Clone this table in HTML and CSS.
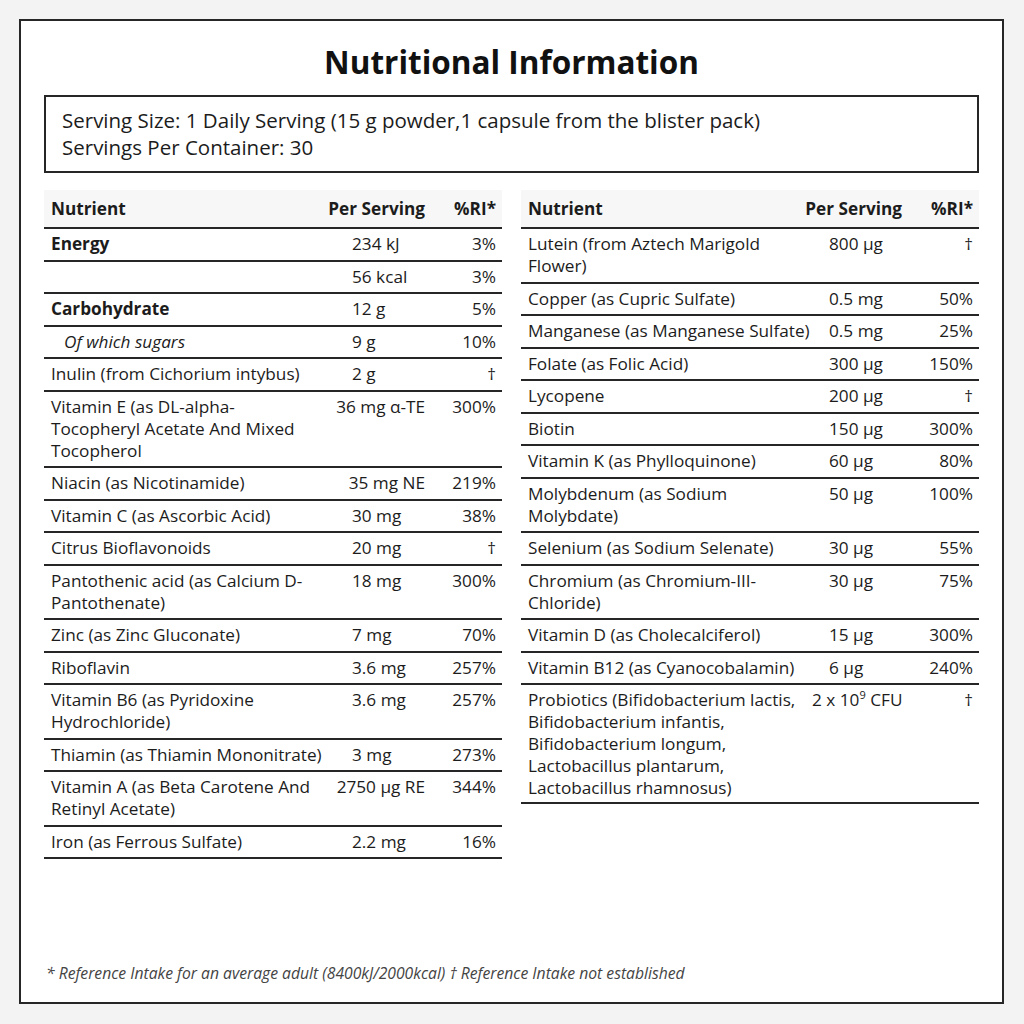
FILE: index.html
```html
<!DOCTYPE html>
<html lang="en">
<head>
<meta charset="utf-8">
<title>Nutritional Information</title>
<link rel="stylesheet" href="styles.css">
</head>
<body>
<div class="card">
  <h1 class="title">Nutritional Information</h1>
  <div class="serving">
    <div>Serving Size: 1 Daily Serving (15 g powder,1 capsule from the blister pack)</div>
    <div>Servings Per Container: 30</div>
  </div>
  <div class="tables">
    <table class="nt nt-left">
      <colgroup><col class="c1"><col class="c2"><col class="c3"></colgroup>
      <thead>
        <tr><th class="name">Nutrient</th><th class="amt"><span class="hd">Per Serving</span></th><th class="ri">%RI*</th></tr>
      </thead>
      <tbody>
        <tr><td class="name bold">Energy</td><td class="amt"><span class="v">234 kJ</span></td><td class="ri">3%</td></tr>
        <tr><td class="name"></td><td class="amt"><span class="v">56 kcal</span></td><td class="ri">3%</td></tr>
        <tr><td class="name bold">Carbohydrate</td><td class="amt"><span class="v">12 g</span></td><td class="ri">5%</td></tr>
        <tr><td class="name sub">Of which sugars</td><td class="amt"><span class="v">9 g</span></td><td class="ri">10%</td></tr>
        <tr><td class="name">Inulin (from Cichorium intybus)</td><td class="amt"><span class="v">2 g</span></td><td class="ri">†</td></tr>
        <tr><td class="name">Vitamin E (as DL-alpha-Tocopheryl Acetate And Mixed Tocopherol</td><td class="amt"><span class="v">36 mg α-TE</span></td><td class="ri">300%</td></tr>
        <tr><td class="name">Niacin (as Nicotinamide)</td><td class="amt"><span class="v">35 mg NE</span></td><td class="ri">219%</td></tr>
        <tr><td class="name">Vitamin C (as Ascorbic Acid)</td><td class="amt"><span class="v">30 mg</span></td><td class="ri">38%</td></tr>
        <tr><td class="name">Citrus Bioflavonoids</td><td class="amt"><span class="v">20 mg</span></td><td class="ri">†</td></tr>
        <tr><td class="name">Pantothenic acid (as Calcium D-Pantothenate)</td><td class="amt"><span class="v">18 mg</span></td><td class="ri">300%</td></tr>
        <tr><td class="name">Zinc (as Zinc Gluconate)</td><td class="amt"><span class="v">7 mg</span></td><td class="ri">70%</td></tr>
        <tr><td class="name">Riboflavin</td><td class="amt"><span class="v">3.6 mg</span></td><td class="ri">257%</td></tr>
        <tr><td class="name">Vitamin B6 (as Pyridoxine Hydrochloride)</td><td class="amt"><span class="v">3.6 mg</span></td><td class="ri">257%</td></tr>
        <tr><td class="name">Thiamin (as Thiamin Mononitrate)</td><td class="amt"><span class="v">3 mg</span></td><td class="ri">273%</td></tr>
        <tr><td class="name">Vitamin A (as Beta Carotene And Retinyl Acetate)</td><td class="amt"><span class="v">2750 µg RE</span></td><td class="ri">344%</td></tr>
        <tr><td class="name">Iron (as Ferrous Sulfate)</td><td class="amt"><span class="v">2.2 mg</span></td><td class="ri">16%</td></tr>
      </tbody>
    </table>
    <table class="nt nt-right">
      <colgroup><col class="c1"><col class="c2"><col class="c3"></colgroup>
      <thead>
        <tr><th class="name">Nutrient</th><th class="amt"><span class="hd">Per Serving</span></th><th class="ri">%RI*</th></tr>
      </thead>
      <tbody>
        <tr><td class="name">Lutein (from Aztech Marigold Flower)</td><td class="amt"><span class="v">800 µg</span></td><td class="ri">†</td></tr>
        <tr><td class="name">Copper (as Cupric Sulfate)</td><td class="amt"><span class="v">0.5 mg</span></td><td class="ri">50%</td></tr>
        <tr><td class="name">Manganese (as Manganese Sulfate)</td><td class="amt"><span class="v">0.5 mg</span></td><td class="ri">25%</td></tr>
        <tr><td class="name">Folate (as Folic Acid)</td><td class="amt"><span class="v">300 µg</span></td><td class="ri">150%</td></tr>
        <tr><td class="name">Lycopene</td><td class="amt"><span class="v">200 µg</span></td><td class="ri">†</td></tr>
        <tr><td class="name">Biotin</td><td class="amt"><span class="v">150 µg</span></td><td class="ri">300%</td></tr>
        <tr><td class="name">Vitamin K (as Phylloquinone)</td><td class="amt"><span class="v">60 µg</span></td><td class="ri">80%</td></tr>
        <tr><td class="name">Molybdenum (as Sodium Molybdate)</td><td class="amt"><span class="v">50 µg</span></td><td class="ri">100%</td></tr>
        <tr><td class="name">Selenium (as Sodium Selenate)</td><td class="amt"><span class="v">30 µg</span></td><td class="ri">55%</td></tr>
        <tr><td class="name">Chromium (as Chromium-III-Chloride)</td><td class="amt"><span class="v">30 µg</span></td><td class="ri">75%</td></tr>
        <tr><td class="name">Vitamin D (as Cholecalciferol)</td><td class="amt"><span class="v">15 µg</span></td><td class="ri">300%</td></tr>
        <tr><td class="name">Vitamin B12 (as Cyanocobalamin)</td><td class="amt"><span class="v">6 µg</span></td><td class="ri">240%</td></tr>
        <tr><td class="name probi">Probiotics (Bifidobacterium lactis, Bifidobacterium infantis, Bifidobacterium longum, Lactobacillus plantarum, Lactobacillus rhamnosus)</td><td class="amt probi"><span class="v">2 x 10<sup>9</sup> CFU</span></td><td class="ri probi">†</td></tr>
      </tbody>
    </table>
  </div>
  <p class="footnote">* Reference Intake for an average adult (8400kJ/2000kcal) † Reference Intake not established</p>
</div>
</body>
</html>
```

FILE: styles.css
```css
html, body {
  margin: 0;
  padding: 0;
}
body {
  background: #f3f3f3;
  padding: 19px;
  font-family: "Open Sans", "Liberation Sans", sans-serif;
  color: #1c1c1c;
}
.card {
  box-sizing: border-box;
  width: 985px;
  height: 985px;
  background: #fff;
  border: 2px solid #262626;
  padding: 0 23px;
  display: flex;
  flex-direction: column;
}
.title {
  margin: 21px 0 13px;
  font-size: 31.5px;
  line-height: 40px;
  font-weight: 700;
  text-align: center;
  color: #111;
}
.serving {
  border: 2px solid #262626;
  padding: 10px 16px;
  font-size: 20.5px;
  line-height: 27px;
}
.tables {
  margin-top: 17px;
  display: grid;
  grid-template-columns: 458px 458px;
  column-gap: 19px;
  align-items: start;
}
.nt {
  width: 458px;
  table-layout: fixed;
  border-collapse: collapse;
  font-size: 17.2px;
  line-height: 22px;
}
.nt-left .c1 { width: 279px; }
.nt-left .c2 { width: 109px; }
.nt-right .c1 { width: 291px; }
.nt-right .c2 { width: 97px; }
.nt .c3 { width: 70px; }
.nt th {
  background: #f7f7f7;
  font-weight: 700;
  padding: 8px 0 7px;
  border-bottom: 2px solid #262626;
  white-space: nowrap;
}
.nt td {
  padding: 4.25px 0;
  border-bottom: 2px solid #262626;
  vertical-align: top;
}
.nt td.probi {
  padding-bottom: 2.5px;
}
.nt .name {
  text-align: left;
  padding-left: 7px;
  padding-right: 0;
}
.nt .name.sub {
  padding-left: 20px;
  font-style: italic;
}
.nt .bold { font-weight: 700; }
.nt .amt {
  padding-right: 7px;
  text-align: right;
}
.nt .hd {
  display: flex;
  justify-content: flex-end;
  white-space: nowrap;
}
.nt .v {
  display: inline-block;
  min-width: 73px;
  text-align: left;
  white-space: nowrap;
}
.nt .v sup {
  font-size: 11px;
  line-height: 0;
  vertical-align: 7px;
}
.nt .ri {
  text-align: right;
  padding-right: 6px;
}
.footnote {
  margin: auto 0 0;
  padding: 0 0 19px 2px;
  font-size: 15.7px;
  line-height: 20px;
  font-style: italic;
  color: #444;
}
```
